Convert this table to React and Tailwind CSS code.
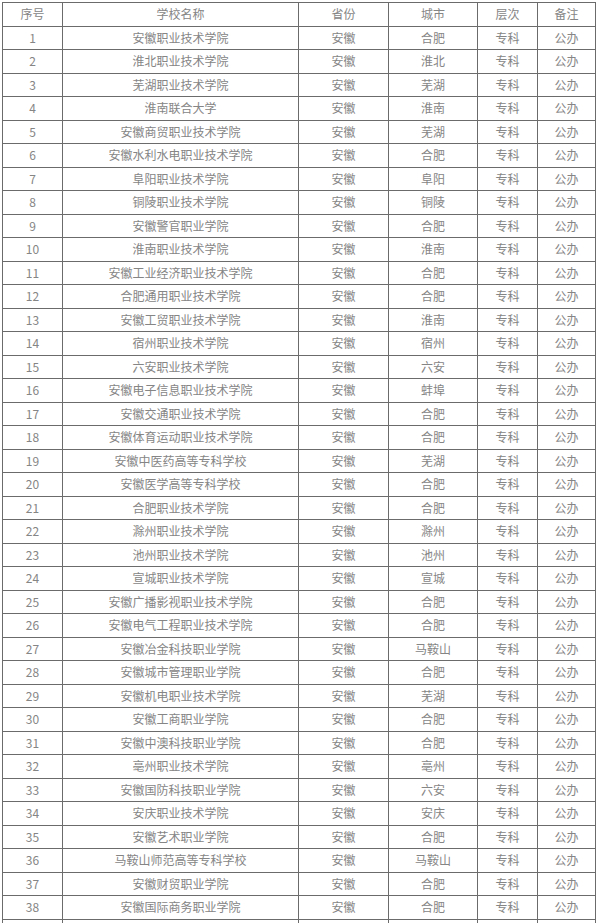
const rows = [
  ['安徽职业技术学院', '合肥'],
  ['淮北职业技术学院', '淮北'],
  ['芜湖职业技术学院', '芜湖'],
  ['淮南联合大学', '淮南'],
  ['安徽商贸职业技术学院', '芜湖'],
  ['安徽水利水电职业技术学院', '合肥'],
  ['阜阳职业技术学院', '阜阳'],
  ['铜陵职业技术学院', '铜陵'],
  ['安徽警官职业学院', '合肥'],
  ['淮南职业技术学院', '淮南'],
  ['安徽工业经济职业技术学院', '合肥'],
  ['合肥通用职业技术学院', '合肥'],
  ['安徽工贸职业技术学院', '淮南'],
  ['宿州职业技术学院', '宿州'],
  ['六安职业技术学院', '六安'],
  ['安徽电子信息职业技术学院', '蚌埠'],
  ['安徽交通职业技术学院', '合肥'],
  ['安徽体育运动职业技术学院', '合肥'],
  ['安徽中医药高等专科学校', '芜湖'],
  ['安徽医学高等专科学校', '合肥'],
  ['合肥职业技术学院', '合肥'],
  ['滁州职业技术学院', '滁州'],
  ['池州职业技术学院', '池州'],
  ['宣城职业技术学院', '宣城'],
  ['安徽广播影视职业技术学院', '合肥'],
  ['安徽电气工程职业技术学院', '合肥'],
  ['安徽冶金科技职业学院', '马鞍山'],
  ['安徽城市管理职业学院', '合肥'],
  ['安徽机电职业技术学院', '芜湖'],
  ['安徽工商职业学院', '合肥'],
  ['安徽中澳科技职业学院', '合肥'],
  ['亳州职业技术学院', '亳州'],
  ['安徽国防科技职业学院', '六安'],
  ['安庆职业技术学院', '安庆'],
  ['安徽艺术职业学院', '合肥'],
  ['马鞍山师范高等专科学校', '马鞍山'],
  ['安徽财贸职业学院', '合肥'],
  ['安徽国际商务职业学院', '合肥'],
];

const cell = 'border border-[#6b6b6b] text-center align-middle p-0';

export default function App() {
  return (
    <div className="w-[598px] h-[923px] overflow-hidden bg-white pl-[2px] pt-[2px]">
      <table
        className="table-fixed border-collapse w-[593px] text-[12px] leading-none text-[#858585]"
        style={{ fontFamily: '"Noto Sans CJK SC", "Noto Sans", sans-serif' }}
      >
        <colgroup>
          <col className="w-[60px]" />
          <col className="w-[236px]" />
          <col className="w-[90px]" />
          <col className="w-[89px]" />
          <col className="w-[60px]" />
          <col className="w-[58px]" />
        </colgroup>
        <thead>
          <tr className="h-[23.5px]">
            <th className={cell + ' font-normal'}>序号</th>
            <th className={cell + ' font-normal'}>学校名称</th>
            <th className={cell + ' font-normal'}>省份</th>
            <th className={cell + ' font-normal'}>城市</th>
            <th className={cell + ' font-normal'}>层次</th>
            <th className={cell + ' font-normal'}>备注</th>
          </tr>
        </thead>
        <tbody>
          {rows.map(([name, city], i) => (
            <tr key={i} className="h-[23.5px]">
              <td className={cell}>{i + 1}</td>
              <td className={cell}>{name}</td>
              <td className={cell}>安徽</td>
              <td className={cell}>{city}</td>
              <td className={cell}>专科</td>
              <td className={cell}>公办</td>
            </tr>
          ))}
          {/* next row is cut off by the viewport; only its borders show */}
          <tr className="h-[23.5px]">
            <td className={cell}></td>
            <td className={cell}></td>
            <td className={cell}></td>
            <td className={cell}></td>
            <td className={cell}></td>
            <td className={cell}></td>
          </tr>
        </tbody>
      </table>
    </div>
  );
}
